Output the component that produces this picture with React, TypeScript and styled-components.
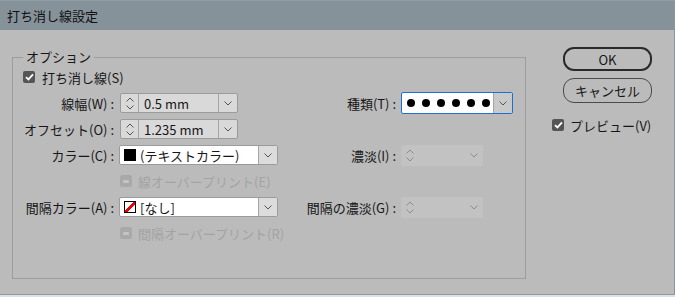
import React from "react";
import styled, { createGlobalStyle } from "styled-components";

const GlobalStyle = createGlobalStyle`
  html, body {
    margin: 0;
    padding: 0;
    background: #dde1e3;
  }
  body {
    font-family: "Noto Sans CJK JP", "Noto Sans", sans-serif;
    font-size: 13px;
    color: #161616;
  }
`;

const Window = styled.div`
  box-sizing: border-box;
  width: 675px;
  height: 295px;
  display: flex;
  flex-direction: column;
  border-right: 1px solid #8a979e;
  border-bottom: 1px solid #8a979e;
  background-color: #bbbbbb;
  background-image: radial-gradient(#b5b5b5 0.5px, transparent 0.7px);
  background-size: 4px 4px;
`;

const TitleBar = styled.div`
  height: 30px;
  flex-shrink: 0;
  display: flex;
  align-items: center;
  padding-left: 7px;
  background: #86929a;
  border-top: 1px solid #909ca3;
  box-sizing: border-box;
  font-size: 13px;
  color: #111;
`;

const Body = styled.div`
  flex: 1;
  display: flex;
  align-items: flex-start;
`;

const Group = styled.fieldset`
  box-sizing: border-box;
  width: 514px;
  height: 230px;
  margin: 19px 0 0 12px;
  padding: 0;
  border: 1px solid #9d9d9d;
  min-width: 0;
`;

const Legend = styled.legend`
  margin-left: 10px;
  padding: 0 3px;
  line-height: 16px;
  font-size: 13px;
`;

const CheckRow = styled.label<{ disabled?: boolean }>`
  display: flex;
  align-items: center;
  gap: 7px;
  height: 24px;
  color: ${({ disabled }) => (disabled ? "#a3a3a3" : "#161616")};
`;

const TopCheck = styled(CheckRow)`
  padding-left: 10px;
`;

const Box = styled.span<{ disabled?: boolean }>`
  width: 12px;
  height: 12px;
  border-radius: 2px;
  flex-shrink: 0;
  display: flex;
  align-items: center;
  justify-content: center;
  background: ${({ disabled }) => (disabled ? "#a9a9a9" : "#555")};
`;

const Dash = styled.span`
  width: 6px;
  height: 3px;
  border-radius: 1px;
  background: #c4c4c4;
`;

const Grid = styled.div`
  display: grid;
  grid-template-columns: 106px 160px 122px 112px;
  grid-auto-rows: 26px;
  align-items: center;
  margin-top: 1px;
`;

const Label = styled.span`
  text-align: right;
  padding-right: 5px;
  white-space: nowrap;
`;

const Spinner = styled.div<{ disabled?: boolean }>`
  box-sizing: border-box;
  display: flex;
  height: ${({ disabled }) => (disabled ? "21px" : "20px")};
  width: ${({ disabled }) => (disabled ? "82px" : "118px")};
  margin-left: ${({ disabled }) => (disabled ? "0" : "1px")};
  border: ${({ disabled }) => (disabled ? "none" : "1px solid #9b9b9b")};
  border-radius: 2px;
  background: ${({ disabled }) => (disabled ? "#c2c2c2" : "#d9d9d9")};
`;

const Steps = styled.div<{ disabled?: boolean }>`
  width: 17px;
  flex-shrink: 0;
  display: flex;
  flex-direction: column;
  align-items: center;
  justify-content: center;
  gap: 3px;
  border-right: ${({ disabled }) => (disabled ? "none" : "1px solid #a5a5a5")};
`;

const Value = styled.div`
  flex: 1;
  display: flex;
  align-items: center;
  padding-left: 5px;
  line-height: 1;
`;

const Arrow = styled.div<{ tone?: string; sep?: boolean }>`
  width: 18px;
  flex-shrink: 0;
  display: flex;
  align-items: center;
  justify-content: center;
  background: ${({ tone }) => tone || "transparent"};
  border-left: ${({ sep }) => (sep ? "1px solid #a5a5a5" : "none")};
`;

const Select = styled.div<{ width: number; focus?: boolean }>`
  box-sizing: border-box;
  display: flex;
  height: ${({ focus }) => (focus ? "22px" : "20px")};
  width: ${({ width }) => width}px;
  border: 1px solid ${({ focus }) => (focus ? "#1d6fd3" : "#9b9b9b")};
  border-radius: 2px;
  background: #fff;
  overflow: hidden;
`;

const Field = styled.div`
  flex: 1;
  display: flex;
  align-items: center;
  gap: 4px;
  padding-left: 4px;
`;

const Swatch = styled.span<{ none?: boolean }>`
  box-sizing: border-box;
  width: 12px;
  height: 12px;
  flex-shrink: 0;
  background: ${({ none }) =>
    none
      ? "linear-gradient(to bottom right, #fff 42%, #e00 42%, #e00 60%, #fff 60%)"
      : "#000"};
  border: 1px solid #000;
`;

const Dots = styled.div`
  flex: 1;
  display: flex;
  align-items: center;
  gap: 7px;
  padding-left: 5px;
`;

const Dot = styled.span`
  width: 8px;
  height: 8px;
  border-radius: 50%;
  background: #000;
`;

const OverRow = styled(CheckRow)`
  grid-column: 2 / span 2;
  padding-left: 1px;
  gap: 6px;
`;

const Side = styled.div`
  display: flex;
  flex-direction: column;
  margin: 17px 0 0 26px;
`;

const Button = styled.button<{ primary?: boolean }>`
  box-sizing: border-box;
  width: 89px;
  height: ${({ primary }) => (primary ? "24px" : "25px")};
  margin-left: 11px;
  margin-bottom: 7px;
  border: ${({ primary }) => (primary ? "2px solid #2a2a2a" : "1px solid #4a4a4a")};
  border-radius: 11px;
  background: transparent;
  font-family: inherit;
  font-size: 13px;
  color: #161616;
  padding: 0;
`;

const Preview = styled(CheckRow)`
  margin-top: 3px;
  gap: 6px;
`;

const Check = () => (
  <svg width="9" height="8" viewBox="0 0 9 8">
    <path d="M1 4.2 L3.4 6.4 L8 1.4" stroke="#fff" strokeWidth="1.8" fill="none" />
  </svg>
);

const Chevron = ({ up, color = "#555" }: { up?: boolean; color?: string }) => (
  <svg width="8" height="5" viewBox="0 0 8 5">
    <path d={up ? "M0.5 4.5 L4 1 L7.5 4.5" : "M0.5 0.5 L4 4 L7.5 0.5"} stroke={color} strokeWidth="1" fill="none" />
  </svg>
);

const Stepper = ({ value, disabled }: { value?: string; disabled?: boolean }) => {
  const c = disabled ? "#8c8c8c" : "#555";
  return (
    <Spinner disabled={disabled}>
      <Steps disabled={disabled}>
        <Chevron up color={c} />
        <Chevron color={c} />
      </Steps>
      <Value>{value}</Value>
      <Arrow sep={!disabled}>
        <Chevron color={c} />
      </Arrow>
    </Spinner>
  );
};

const Tick = ({ disabled }: { disabled?: boolean }) => (
  <Box disabled={disabled}>{disabled ? <Dash /> : <Check />}</Box>
);

export default function App() {
  return (
    <>
      <GlobalStyle />
      <Window>
        <TitleBar>打ち消し線設定</TitleBar>
        <Body>
          <Group>
            <Legend>オプション</Legend>
            <TopCheck>
              <Tick />
              打ち消し線(S)
            </TopCheck>
            <Grid>
              <Label>線幅(W) :</Label>
              <Stepper value="0.5 mm" />
              <Label>種類(T) :</Label>
              <Select width={112} focus>
                <Dots>
                  {Array.from({ length: 6 }).map((_, i) => (
                    <Dot key={i} />
                  ))}
                </Dots>
                <Arrow tone="#c9c9c9" sep>
                  <Chevron />
                </Arrow>
              </Select>

              <Label>オフセット(O) :</Label>
              <Stepper value="1.235 mm" />
              <span />
              <span />

              <Label>カラー(C) :</Label>
              <Select width={159}>
                <Field>
                  <Swatch />
                  (テキストカラー)
                </Field>
                <Arrow tone="#dcdcdc" sep>
                  <Chevron />
                </Arrow>
              </Select>
              <Label>濃淡(I) :</Label>
              <Stepper disabled />

              <span />
              <OverRow disabled>
                <Tick disabled />
                線オーバープリント(E)
              </OverRow>
              <span />

              <Label>間隔カラー(A) :</Label>
              <Select width={159}>
                <Field>
                  <Swatch none />
                  [なし]
                </Field>
                <Arrow tone="#dcdcdc" sep>
                  <Chevron />
                </Arrow>
              </Select>
              <Label>間隔の濃淡(G) :</Label>
              <Stepper disabled />

              <span />
              <OverRow disabled>
                <Tick disabled />
                間隔オーバープリント(R)
              </OverRow>
            </Grid>
          </Group>
          <Side>
            <Button primary>OK</Button>
            <Button>キャンセル</Button>
            <Preview>
              <Tick />
              プレビュー(V)
            </Preview>
          </Side>
        </Body>
      </Window>
    </>
  );
}
